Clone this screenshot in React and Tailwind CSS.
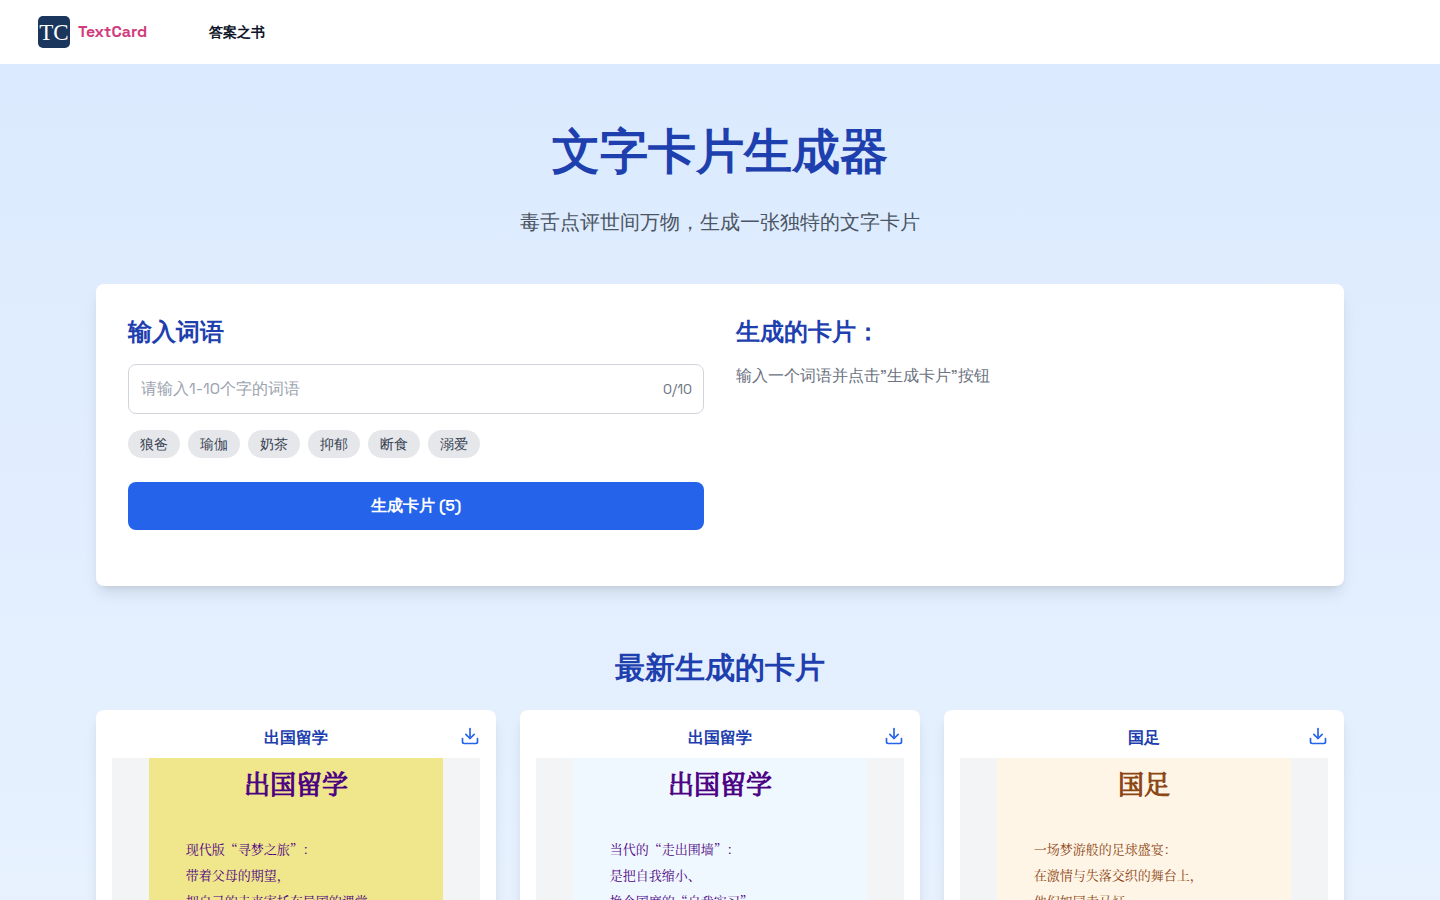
import { useState } from "react";
import { Download } from "lucide-react";

const WORDS = ["狼爸", "瑜伽", "奶茶", "抑郁", "断食", "溺爱"];

const CARDS = [
  {
    id: 1,
    title: "出国留学",
    tone: "bg-[#f0e68c] text-[#4b0082]",
    lines: ["现代版“寻梦之旅”：", "带着父母的期望，", "把自己的未来寄托在异国的课堂"],
  },
  {
    id: 2,
    title: "出国留学",
    tone: "bg-[#f0f8ff] text-[#4b0082]",
    lines: ["当代的“走出围墙”：", "是把自我缩小、", "换个国度的“自我实习”"],
  },
  {
    id: 3,
    title: "国足",
    tone: "bg-[#fff5e6] text-[#8b4513]",
    lines: ["一场梦游般的足球盛宴：", "在激情与失落交织的舞台上，", "他们如同走马灯"],
  },
];

function Logo() {
  return (
    <svg viewBox="0 0 32 32" className="size-8" aria-hidden="true">
      <rect width="32" height="32" rx="5" fill="#1a365d" />
      <text x="16" y="24" textAnchor="middle" fontSize="23" fontWeight="400" fill="#fff" fontFamily="Liberation Serif, serif">
        TC
      </text>
    </svg>
  );
}

function Header() {
  return (
    <header className="flex h-16 items-center gap-[62px] bg-white px-[38px]">
      <a href="#" className="flex items-center gap-2 font-bold text-[#d03c7c]">
        <Logo />
        TextCard
      </a>
      <nav>
        <a href="#" className="text-sm font-bold text-[#0f172a]">答案之书</a>
      </nav>
    </header>
  );
}

function Generator() {
  const [word, setWord] = useState("");
  return (
    <section className="grid min-h-[302px] grid-cols-2 gap-8 rounded-lg bg-white p-8 shadow-lg">
      <div>
        <h2 className="mb-4 text-2xl font-bold text-[#1e40af]">
          <label htmlFor="word">输入词语</label>
        </h2>
        <div className="mb-4 flex h-[50px] items-center rounded-lg border border-[#d1d5db] pr-[11px] pl-3">
          <input
            id="word"
            value={word}
            maxLength={10}
            onChange={(e) => setWord(e.target.value)}
            placeholder="请输入1-10个字的词语"
            className="min-w-0 flex-1 outline-none placeholder:text-[#9ca3af]"
          />
          <span className="text-sm text-[#6b7280]">{word.length}/10</span>
        </div>
        <div className="mb-6 flex gap-2">
          {WORDS.map((w) => (
            <button
              key={w}
              type="button"
              onClick={() => setWord(w)}
              className="rounded-full bg-[#e5e7eb] px-3 py-1 text-sm text-[#374151]"
            >
              {w}
            </button>
          ))}
        </div>
        <button type="button" className="h-12 w-full rounded-lg bg-[#2563eb] font-bold text-white">
          生成卡片 (5)
        </button>
      </div>
      <div>
        <h2 className="mb-4 text-2xl font-bold text-[#1e40af]">生成的卡片：</h2>
        <p className="text-[#6b7280]">输入一个词语并点击”生成卡片”按钮</p>
      </div>
    </section>
  );
}

function Card({ card }) {
  return (
    <article className="rounded-lg bg-white p-4 shadow-lg">
      <div className="mb-2 grid grid-cols-[20px_1fr_20px] items-start">
        <h3 className="col-start-2 text-center font-bold text-[#1e40af]">{card.title}</h3>
        <button type="button" aria-label="下载" className="text-[#2563eb]">
          <Download size={20} />
        </button>
      </div>
      <div className="flex h-[600px] justify-center bg-[#f3f4f6] font-['Noto_Serif_CJK_SC','Noto_Sans_CJK_SC',serif]">
        <div className={`w-4/5 ${card.tone}`}>
          <h4 className="pt-[7px] pb-[9px] text-center text-[26px] leading-9 font-normal [-webkit-text-stroke:1px]">
            {card.title}
          </h4>
          <div className="px-[37px] pt-[26px] text-[13px] leading-[26px] [text-spacing-trim:space-all]">
            {card.lines.map((line) => (
              <p key={line}>{line}</p>
            ))}
          </div>
        </div>
      </div>
    </article>
  );
}

export default function App() {
  return (
    <div className="h-screen overflow-hidden bg-white font-['Space_Grotesk',sans-serif]">
      <Header />
      <main className="bg-linear-to-b/srgb from-[#dbeafe] to-[#eff6ff] px-24 pt-14 pb-16">
        <h1 className="mb-6 text-center text-5xl leading-[64px] font-bold text-[#1e40af]">文字卡片生成器</h1>
        <p className="mb-12 text-center text-xl text-[#4b5563]">毒舌点评世间万物，生成一张独特的文字卡片</p>
        <Generator />
        <h2 className="mt-16 mb-6 text-center text-3xl font-bold text-[#1e40af]">最新生成的卡片</h2>
        <div className="grid grid-cols-3 gap-6">
          {CARDS.map((card) => (
            <Card key={card.id} card={card} />
          ))}
        </div>
      </main>
    </div>
  );
}
